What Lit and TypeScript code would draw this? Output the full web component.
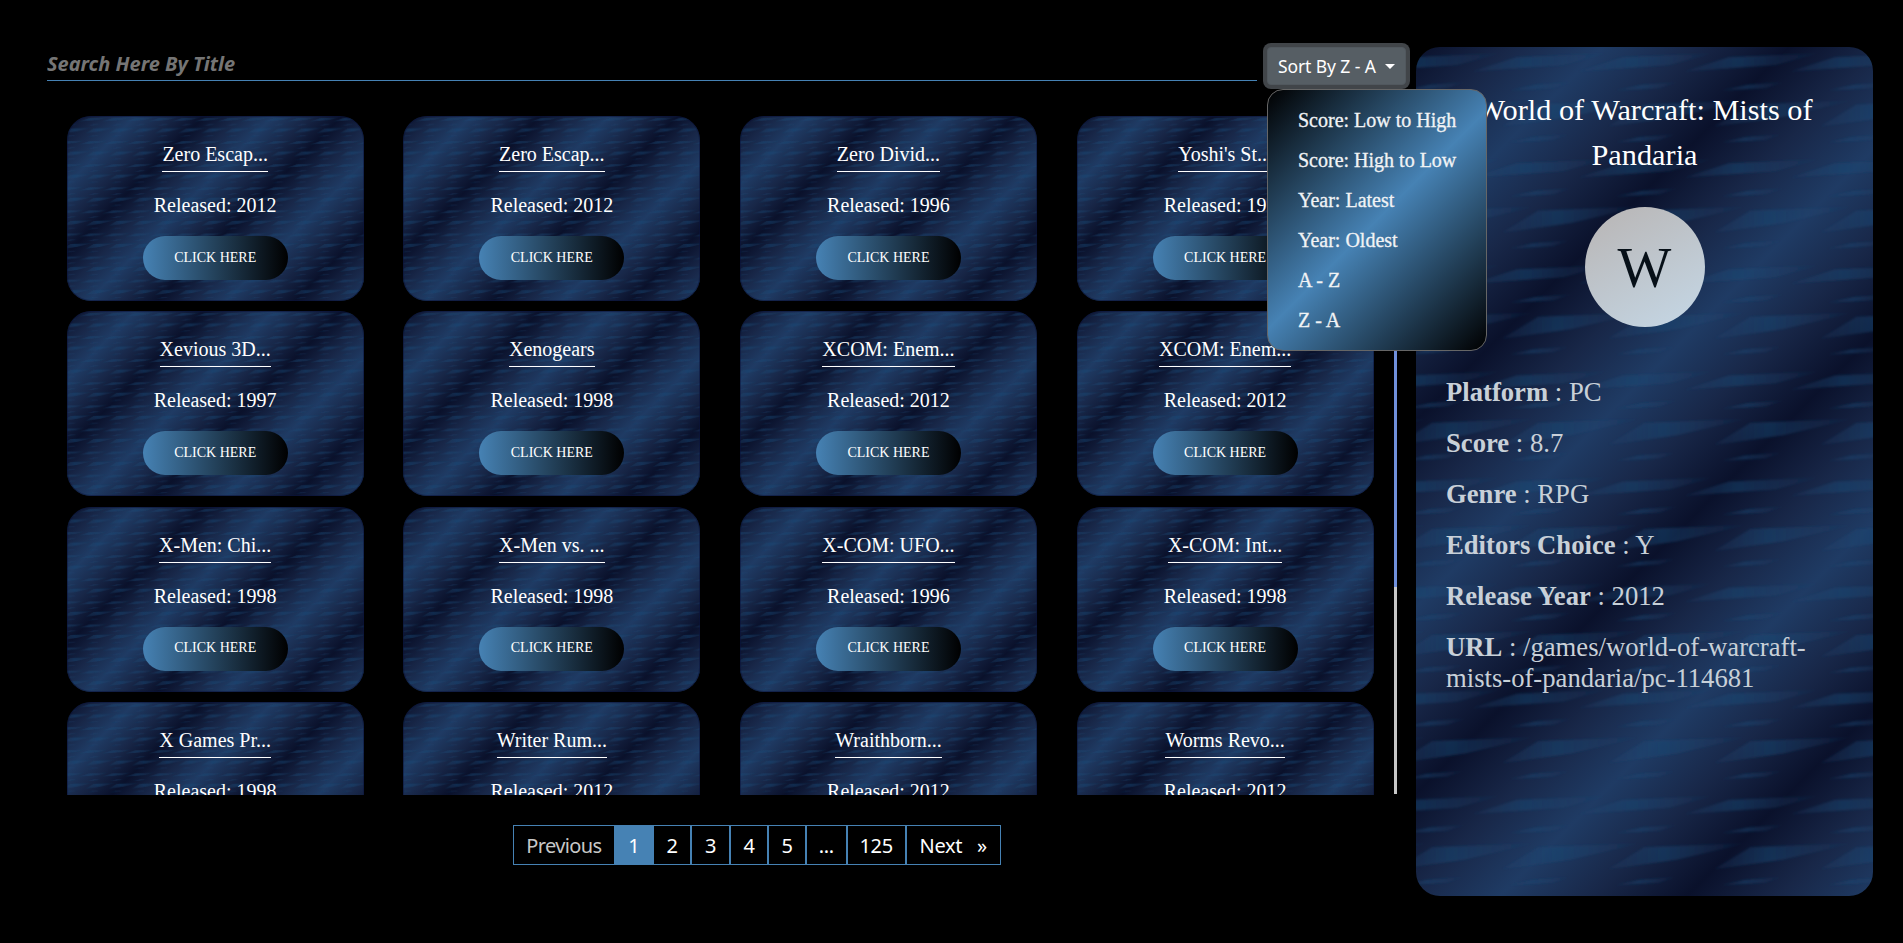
import { LitElement, html, css, svg } from 'lit';
import { customElement } from 'lit/decorators.js';

const games = [
  ['Zero Escap...', 2012], ['Zero Escap...', 2012], ['Zero Divid...', 1996], ["Yoshi's St...", 1998],
  ['Xevious 3D...', 1997], ['Xenogears', 1998], ['XCOM: Enem...', 2012], ['XCOM: Enem...', 2012],
  ['X-Men: Chi...', 1998], ['X-Men vs. ...', 1998], ['X-COM: UFO...', 1996], ['X-COM: Int...', 1998],
  ['X Games Pr...', 1998], ['Writer Rum...', 2012], ['Wraithborn...', 2012], ['Worms Revo...', 2012],
];
const details = [
  ['Platform', 'PC'], ['Score', '8.7'], ['Genre', 'RPG'], ['Editors Choice', 'Y'],
  ['Release Year', '2012'], ['URL', '/games/world-of-warcraft-mists-of-pandaria/pc-114681'],
];
const sorts = ['Score: Low to High', 'Score: High to Low', 'Year: Latest', 'Year: Oldest', 'A - Z', 'Z - A'];
const pages = ['1', '2', '3', '4', '5', '...', '125'];
const widths = [38.3, 38, 39, 38, 38, 40.7, 59];

// Streaked navy backdrop: repeated diagonal gradient with a tile of slanted wisps over it.
const backdrop = (id: string, tile: number, half: number) => html`
  <svg class="backdrop" aria-hidden="true">
    <defs>
      <linearGradient id="g${id}" gradientUnits="userSpaceOnUse" spreadMethod="reflect" x1="0" y1="0" x2=${half} y2=${half}>
        <stop offset="0" stop-color="#0a112b" />
        <stop offset=".5" stop-color="#182748" />
        <stop offset="1" stop-color="#1f3b64" />
      </linearGradient>
      <linearGradient id="s${id}">
        <stop offset="0" stop-color="#1d4b78" stop-opacity=".15" />
        <stop offset=".4" stop-color="#1d4b78" stop-opacity=".45" />
        <stop offset="1" stop-color="#1d4b78" stop-opacity=".05" />
      </linearGradient>
      <filter id="f${id}"><feGaussianBlur stdDeviation="1.3" /></filter>
      <pattern id="p${id}" patternUnits="userSpaceOnUse" width=${tile} height=${tile} viewBox="0 0 106.1 106.1">
        ${[106.1, 0, -106.1, -212.2].map((o) => svg`<g transform="translate(${o} 0)" fill="url(#s${id})" filter="url(#f${id})">
          <path d="M-20.4 79.6 L16.2 57.5 L118 53.6 L49 70Z" />
          <path d="M92.3 95.6 L117 90.3 L154 87.3 L137 93Z" />
          <path d="M55.7 24.5 L100.7 10.2 L190.7 6.2 L147 18Z" />
          <path d="M92.3 43.5 L120.7 37.6 L155.7 35.2 L137 41.2Z" />
        </g>`)}
      </pattern>
    </defs>
    <rect width="100%" height="100%" fill="url(#g${id})" />
    <rect width="100%" height="100%" fill="url(#p${id})" />
  </svg>`;

@customElement('app-root')
export class AppRoot extends LitElement {
  static styles = css`
    :host { display: block; height: 943px; overflow: hidden; background: #000; color: #fff; font-family: "Liberation Serif", serif; }
    * { box-sizing: border-box; }
    .page { display: grid; grid-template-columns: 1369px 457px; padding: 47px 30px 0 47px; }
    .top { display: flex; height: 69px; }
    .search { width: 1210px; height: 34px; padding: 0 0 1px; border: 0; border-bottom: 1px solid #4682b4; background: transparent; font: italic 700 20px "Noto Sans", sans-serif; outline: 0; }
    .search::placeholder { color: #757575; opacity: 1; }
    .sort { position: relative; z-index: 2; margin-left: 10px; }
    .toggle { display: flex; align-items: center; width: 139px; height: 38px; padding: 0 10px; border: 1px solid #51585e; border-radius: 4px; background: #565e64; box-shadow: 0 0 0 4px rgba(130, 138, 145, .5); color: #fff; font: 17.5px "Noto Sans", sans-serif; white-space: nowrap; letter-spacing: -.1px; }
    .caret { margin-left: auto; border: 5px solid transparent; border-top-color: #fff; border-bottom: 0; }
    .menu { position: absolute; left: 0; top: 42px; width: 220px; height: 262px; padding: 10px 30px; border: 1px solid #666; border-radius: 16px; background: linear-gradient(135deg, #000, #4682b4, #000); color: #f1f3f5; }
    .option { height: 40px; font-size: 20px; line-height: 40px; white-space: nowrap; -webkit-text-stroke: .3px; }
    .listing { display: flex; height: 679px; width: 1350px; justify-content: space-between; overflow: hidden; }
    .grid { display: grid; grid-template-columns: repeat(4, 297px); grid-auto-rows: 185px; gap: 10.33px 39.67px; margin-left: 19.67px; }
    .card { position: relative; overflow: hidden; display: flex; flex-direction: column; align-items: center; border-radius: 24px; }
    .card::after { content: ""; position: absolute; inset: 0; border: 1px solid rgba(10, 18, 60, .5); border-radius: 24px; pointer-events: none; }
    .card > :not(.backdrop), .detail > :not(.backdrop) { position: relative; }
    .backdrop { position: absolute; inset: 0; width: 100%; height: 100%; }
    .name { height: 30px; margin-top: 26px; border-bottom: 1px solid #fff; font-size: 20px; line-height: 25px; }
    .year { margin: 21px 0 0; font-size: 20px; line-height: 24px; }
    .btn { width: 145px; height: 44px; margin-top: 19px; padding: 0 0 1px; border: 0; border-radius: 22px; background: linear-gradient(90deg, #4682b4, #000); color: #fff; font: 14px "Liberation Serif", serif; }
    .bar { width: 3px; height: 678px; background: linear-gradient(#7090dc 471px, #c8c8c8 471px); }
    .pager { display: flex; width: fit-content; margin: 30px 0 0 466px; border: 1px solid #4682b4; height: 40px; font: 20px/39.5px "Noto Sans", sans-serif; }
    .pg { height: 38px; border-left: 2px solid #4682b4; text-align: center; letter-spacing: -.3px; white-space: nowrap; }
    .prev { width: 99.7px; color: #c8c8c8; border: 0; letter-spacing: -.65px; }
    .next { width: 95px; }
    .on { background: #4682b4; }
    .detail { position: relative; height: 849px; padding: 41px 30px; border-radius: 24px; overflow: hidden; }
    .title { margin: 0; font-size: 30.3px; font-weight: 400; line-height: 45px; text-align: center; }
    .avatar { display: flex; justify-content: center; align-items: center; width: 120px; height: 120px; margin: 29px auto 49px; border-radius: 50%; background: linear-gradient(150deg, #b8b4b3, #c5d8e7); color: #071018; font-size: 57px; }
    .row { margin: 0 0 20px; color: #c8d0d8; font-size: 26.67px; line-height: 31px; }
    .row:first-of-type { margin-top: 50px; }
  `;

  render() {
    return html`<div class="page">
      <main>
        <div class="top">
          <input class="search" placeholder="Search Here By Title" />
          <div class="sort">
            <button class="toggle">Sort By Z - A <span class="caret"></span></button>
            <div class="menu">${sorts.map((s) => html`<div class="option">${s}</div>`)}</div>
          </div>
        </div>
        <div class="listing">
          <div class="grid">${games.map(([name, year], i) => html`<article class="card">
            ${backdrop('c' + i, 23.1, 34.4)}
            <div class="name">${name}</div>
            <p class="year">Released: ${year}</p>
            <button class="btn">CLICK HERE</button>
          </article>`)}</div>
          <div class="bar"></div>
        </div>
        <nav class="pager">
          <span class="pg prev">Previous</span>
          ${pages.map((p, i) => html`<span class="pg ${i ? '' : 'on'}" style="width:${widths[i]}px">${p}</span>`)}
          <span class="pg next">Next &nbsp; »</span>
        </nav>
      </main>
      <aside class="detail">
        ${backdrop('d', 106.1, 93.3)}
        <h1 class="title">World of Warcraft: Mists of Pandaria</h1>
        <div class="avatar">W</div>
        ${details.map(([k, v]) => html`<p class="row"><b>${k}</b> : ${v}</p>`)}
      </aside>
    </div>`;
  }
}
